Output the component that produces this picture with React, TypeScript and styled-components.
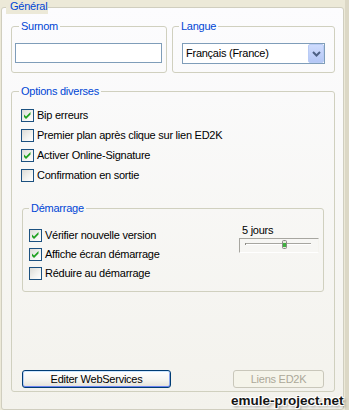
import styled, { createGlobalStyle } from 'styled-components';

const GlobalStyle = createGlobalStyle`
  html, body {
    margin: 0;
    padding: 0;
    background: #ece9d8;
  }
  body {
    font-family: "Liberation Sans", Arial, sans-serif;
    font-size: 11px;
    letter-spacing: -0.25px;
    color: #000;
  }
`;

const Page = styled.div`
  position: relative;
  display: flex;
  width: 349px;
  height: 410px;
  padding-left: 1px;
  box-sizing: border-box;
  overflow: hidden;
`;

const Panel = styled.fieldset`
  box-sizing: border-box;
  width: 343px;
  min-width: 0;
  margin: 0;
  padding: 6px 8px 14px 9px;
  border: 1px solid #d0cebf;
  border-radius: 3px;
  background: linear-gradient(#fcfcfe, #f3f2ec);
  display: flex;
  flex-direction: column;
  gap: 12px;
`;

const Edge = styled.div`
  flex: 1;
  margin-left: 1px;
  background: #dcd8c6;
`;

const PanelTitle = styled.legend`
  margin-left: -5px;
  padding: 0 1px 1px 4px;
  line-height: 13px;
  color: #0046d5;
  background: #ece9d8;
`;

const Group = styled.fieldset<{ $pad: string; $width?: number }>`
  box-sizing: border-box;
  min-width: 0;
  margin: 0;
  width: ${p => (p.$width ? `${p.$width}px` : 'auto')};
  padding: ${p => p.$pad};
  border: 1px solid #d0d0bf;
  border-radius: 3px;
`;

const Legend = styled.legend<{ $ml: number }>`
  margin-left: ${p => p.$ml}px;
  padding: 0 2px;
  line-height: 13px;
  color: #0046d5;
`;

const TopRow = styled.div`
  display: flex;
  gap: 5px;
`;

const TextBox = styled.input`
  display: block;
  box-sizing: border-box;
  width: 147px;
  height: 20px;
  margin: 0;
  border: 1px solid #7f9db9;
  background: #fff;
  outline: none;
`;

const Combo = styled.div`
  display: flex;
  align-items: stretch;
  box-sizing: border-box;
  width: 143px;
  height: 21px;
  border: 1px solid #7f9db9;
  background: #fff;
`;

const ComboText = styled.span`
  flex: 1;
  padding-left: 3px;
  line-height: 19px;
`;

const DropButton = styled.span`
  display: flex;
  align-items: center;
  justify-content: center;
  width: 16px;
  box-sizing: border-box;
  border: 1px solid #b9cbf5;
  border-radius: 2px;
  background: linear-gradient(#cfdcfd, #b4c7f6);
`;

const CheckList = styled.div<{ $gap: number }>`
  display: flex;
  flex-direction: column;
  gap: ${p => p.$gap}px;
`;

const CheckRow = styled.label`
  display: flex;
  align-items: flex-start;
  gap: 3px;
  height: 13px;
  line-height: 13px;
  white-space: nowrap;
`;

const Box = styled.span`
  flex: none;
  display: flex;
  width: 13px;
  height: 13px;
  box-sizing: border-box;
  border: 1px solid #1c5180;
  background: linear-gradient(135deg, #dcdcd7 0%, #f4f4f1 60%, #ffffff 100%);
`;

const OptionsBody = styled.div`
  display: flex;
  flex-direction: column;
  gap: 20px;
`;

const StartupBody = styled.div`
  display: flex;
  justify-content: space-between;
`;

const DelayColumn = styled.div`
  display: flex;
  flex-direction: column;
  width: 80px;
  margin-top: -5px;
`;

const DelayLabel = styled.span`
  padding-left: 3px;
  line-height: 13px;
`;

const SliderFrame = styled.div`
  margin-top: 1px;
  height: 15px;
  box-sizing: border-box;
  border-top: 1px solid #a7a6a0;
  border-left: 1px solid #a7a6a0;
  border-right: 1px solid #f4f3ee;
  border-bottom: 1px solid #ffffff;
`;

const ButtonRow = styled.div`
  display: flex;
  justify-content: space-between;
  margin-top: 78px;
`;

const Button = styled.button<{ $width: number; $default?: boolean }>`
  width: ${p => p.$width}px;
  height: 18px;
  box-sizing: border-box;
  padding: 0;
  font-family: inherit;
  font-size: 11px;
  letter-spacing: inherit;
  color: #000;
  border: 1px solid #003c74;
  border-radius: 3px;
  background: linear-gradient(#ffffff 0%, #f5f5f1 55%, #e4e1d7 100%);
  box-shadow: ${p =>
    p.$default
      ? 'inset 0 1px 0 #cee7ff, inset 0 -1px 0 #6982ee, inset 1px 0 0 #b8d1f7, inset -1px 0 0 #8aa6ec'
      : 'none'};

  &:disabled {
    color: #aca899;
    border-color: #c9c7ba;
    background: #f5f4ea;
    box-shadow: none;
  }
`;

const Watermark = styled.div`
  position: absolute;
  left: 231px;
  top: 393px;
  font-family: "Liberation Sans", Arial, sans-serif;
  font-weight: bold;
  font-size: 13.5px;
  line-height: 16px;
  letter-spacing: 0;
  color: #151515;
  text-shadow: -1px -1px 0 #fff, 1px -1px 0 #fff, -1px 1px 0 #fff, 1px 1px 0 #fff,
    2px 2px 3px rgba(0, 0, 0, 0.45);
  white-space: nowrap;
`;

const Check = ({ checked, label }: { checked?: boolean; label: string }) => (
  <CheckRow>
    <Box>
      {checked && (
        <svg width="11" height="11" viewBox="0 0 11 11">
          <polygon points="2,4.5 4,6.5 8.5,2 8.5,4.5 4,9 2,7" fill="#21a121" />
        </svg>
      )}
    </Box>
    {label}
  </CheckRow>
);

const Chevron = () => (
  <svg width="9" height="6" viewBox="0 0 9 6">
    <polyline points="1,1 4.5,4.5 8,1" fill="none" stroke="#4d6185" strokeWidth="2" />
  </svg>
);

const DaySlider = () => (
  <SliderFrame>
    <svg width="78" height="13" viewBox="0 0 78 13">
      <rect x="5" y="4" width="66" height="1" fill="#a7a6a0" />
      <rect x="5" y="5" width="66" height="1" fill="#ffffff" />
      <rect x="5" y="4" width="1" height="2" fill="#8c8b85" />
      <rect x="42.5" y="1.5" width="4" height="8" rx="1" fill="#e9e8e0" stroke="#8c8b85" />
      <rect x="43" y="4" width="3" height="4" fill="#3fb040" />
    </svg>
  </SliderFrame>
);

export default function App() {
  return (
    <>
      <GlobalStyle />
      <Page>
        <Panel>
          <PanelTitle>Général</PanelTitle>

          <TopRow>
            <Group $pad="10px 4px 9px 3px" $width={156}>
              <Legend $ml={4}>Surnom</Legend>
              <TextBox type="text" />
            </Group>
            <Group $pad="10px 9px 8px 9px" $width={163}>
              <Legend $ml={-3}>Langue</Legend>
              <Combo>
                <ComboText>Français (France)</ComboText>
                <DropButton>
                  <Chevron />
                </DropButton>
              </Combo>
            </Group>
          </TopRow>

          <Group $pad="11px 10px 3px 10px">
            <Legend $ml={-3}>Options diverses</Legend>
            <OptionsBody>
              <CheckList $gap={7} style={{ marginLeft: -1 }}>
                <Check checked label="Bip erreurs" />
                <Check label="Premier plan après clique sur lien ED2K" />
                <Check checked label="Activer Online-Signature" />
                <Check label="Confirmation en sortie" />
              </CheckList>

              <Group $pad="14px 4px 11px 6px">
                <Legend $ml={0}>Démarrage</Legend>
                <StartupBody>
                  <CheckList $gap={6}>
                    <Check checked label="Vérifier nouvelle version" />
                    <Check checked label="Affiche écran démarrage" />
                    <Check label="Réduire au démarrage" />
                  </CheckList>
                  <DelayColumn>
                    <DelayLabel>5 jours</DelayLabel>
                    <DaySlider />
                  </DelayColumn>
                </StartupBody>
              </Group>
            </OptionsBody>

            <ButtonRow>
              <Button $width={149} $default>
                Editer WebServices
              </Button>
              <Button $width={91} disabled>
                Liens ED2K
              </Button>
            </ButtonRow>
          </Group>
        </Panel>
        <Edge />
        <Watermark>emule-project.net</Watermark>
      </Page>
    </>
  );
}
